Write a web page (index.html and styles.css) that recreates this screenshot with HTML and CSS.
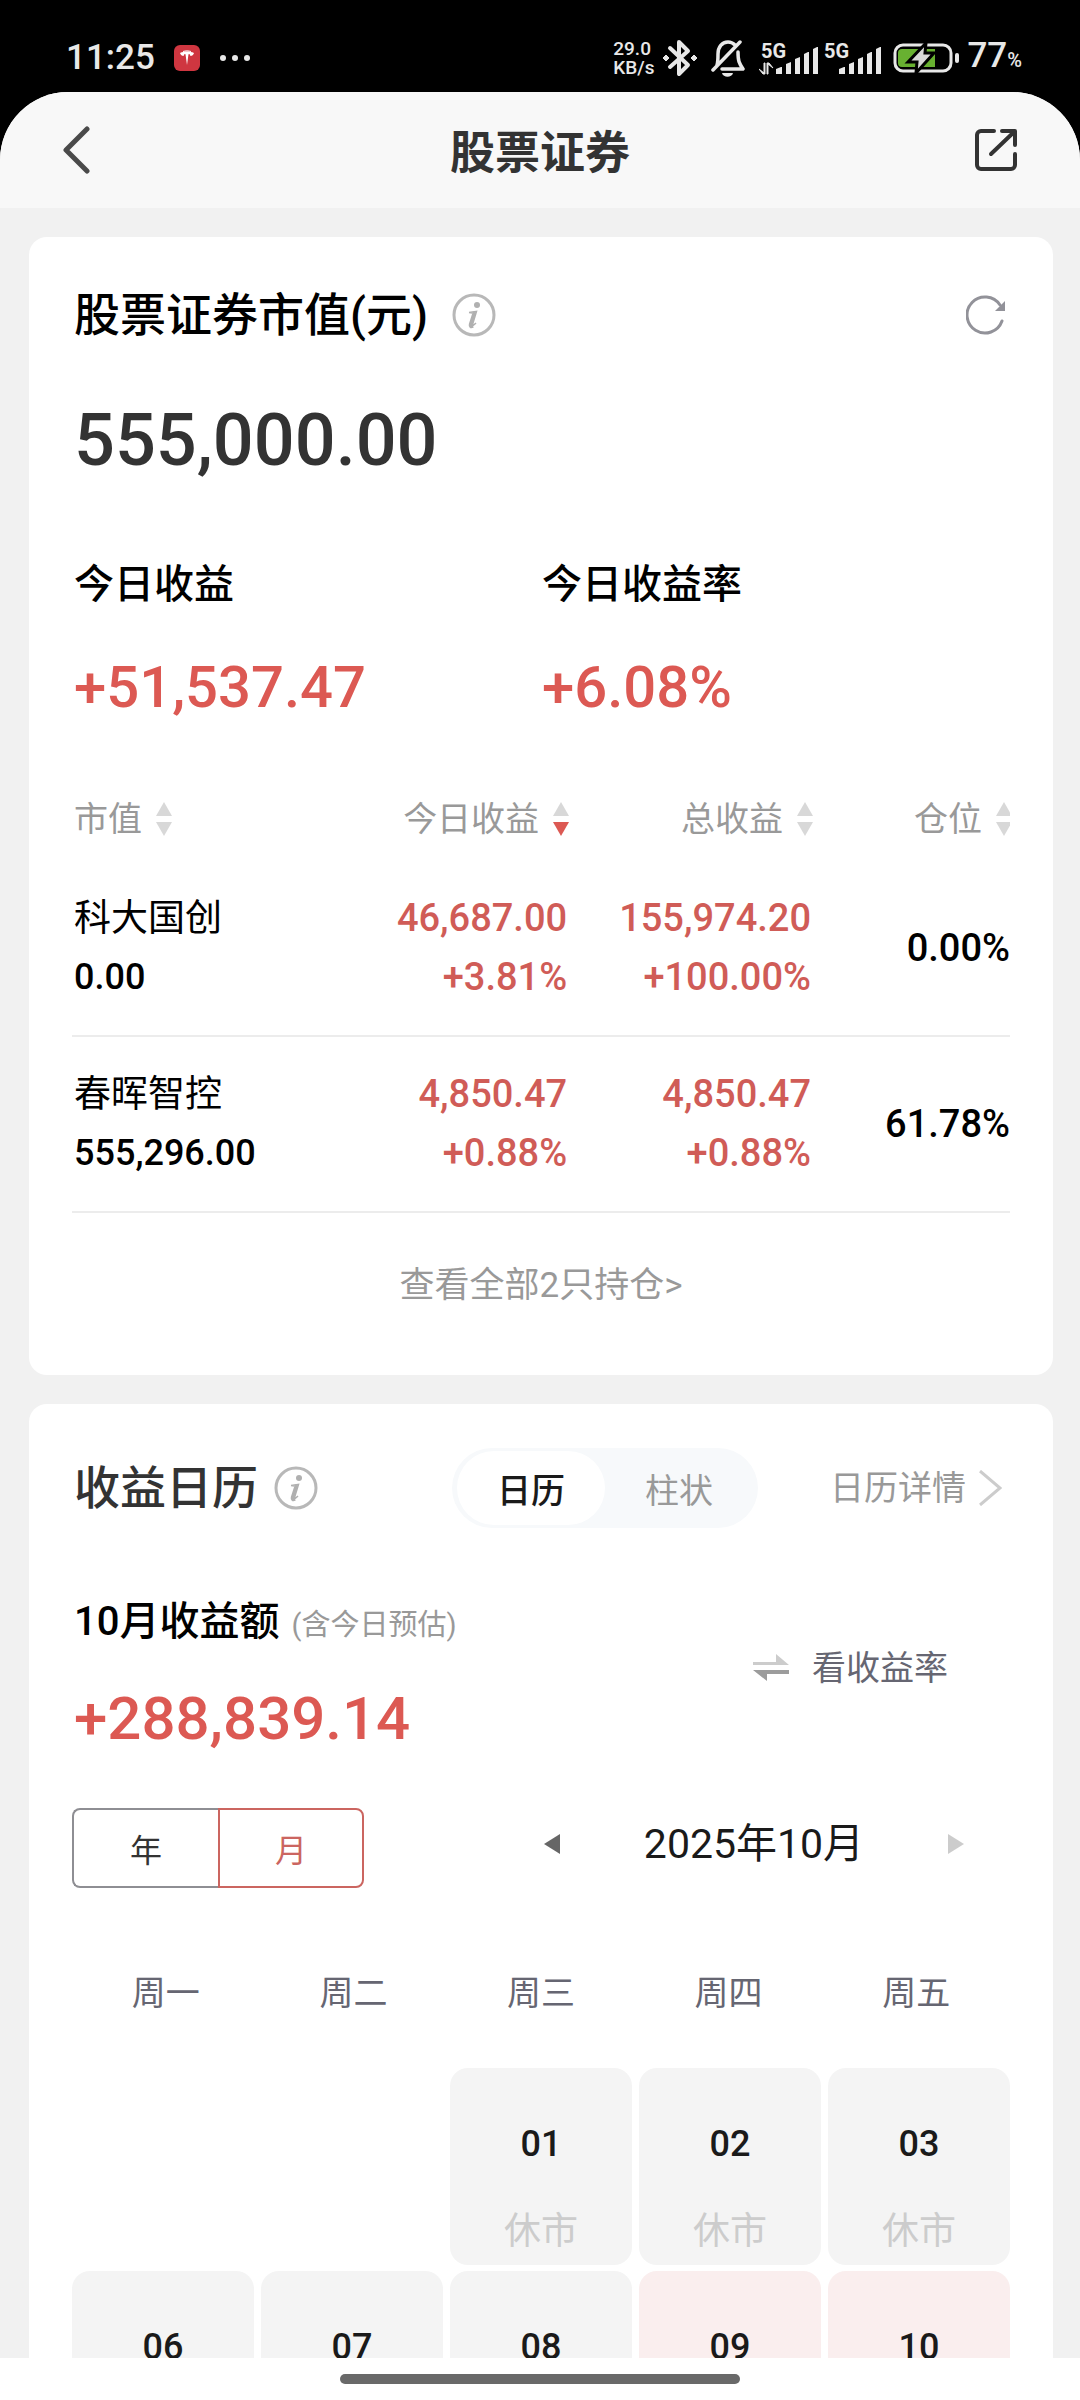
FILE: index.html
```html
<!DOCTYPE html>
<html lang="zh-CN">

<head>
    <meta charset="UTF-8">
    <meta name="viewport" content="width=device-width, initial-scale=1.0">
    <title>股票证券</title>
    <link rel="stylesheet" href="styles.css">
</head>

<body>
    <!-- shared symbols -->
    <svg class="defs" width="0" height="0" aria-hidden="true">
        <symbol id="info" viewBox="0 0 44 44">
            <circle cx="22" cy="22" r="20" fill="none" stroke="#b8b8b8" stroke-width="3" />
            <circle cx="25" cy="12" r="3" fill="#b0b0b0" />
            <path d="M17 19.500l7.500-1-4 13c-.4 1.500.5 1.500 3.500-1.500M17 19.500l3.500.5" fill="none" stroke="#b0b0b0" stroke-width="1.500" />
            <path d="M22.500 19l-4 12.500c-.5 2 .5 2.500 2.500 1.500" fill="none" stroke="#b0b0b0" stroke-width="3.500" />
        </symbol>
        <symbol id="sort" viewBox="0 0 16 34">
            <path class="sort-up" d="M8 0l8 14H0z" />
            <path class="sort-down" d="M0 20h16L8 34z" />
        </symbol>
        <symbol id="bars" viewBox="0 0 42 27">
            <path d="M0 22l5-2h1v7H0zM10 17l5-2v12h-5zM19 12l5-2v17h-5zM28 7l4-2h1v22h-5zM37 2l4-2h1v27h-5z" fill="#e8e8e8" />
        </symbol>
    </svg>

    <div class="status">
        <span class="clock">11:25</span>
        <svg class="app-badge" width="26" height="26" viewBox="0 0 26 26">
            <rect width="26" height="26" rx="6" fill="#cf3640" />
            <path d="M6 8c4-2 10-2 14 0-.5 2-2 3-3.500 3l-1-2-1 .3L13 20l-1.500-10.700-1-.3-1 2C8 11 6.500 10 6 8z" fill="#fff" />
            <path d="M9 6.500c2.500-.8 5.500-.8 8 0" fill="none" stroke="#fff" />
        </svg>
        <svg class="dots" width="30" height="8" viewBox="0 0 30 8" fill="#e8e8e8">
            <circle cx="3" cy="4" r="3" />
            <circle cx="15" cy="4" r="3" />
            <circle cx="27" cy="4" r="3" />
        </svg>

        <div class="status-right">
            <span class="speed"><span>29.0</span><span>KB/s</span></span>
            <svg width="34" height="38" viewBox="0 0 34 38">
                <path d="M7 9l18 17-9 9V3l9 9L7 28" fill="none" stroke="#e8e8e8" stroke-width="4" stroke-linejoin="round" stroke-linecap="round" />
                <path d="M3 16l3 3-3 3-3-3zM31 16l3 3-3 3-3-3z" fill="#e8e8e8" stroke="#e8e8e8" />
            </svg>
            <svg class="bell" width="34" height="38" viewBox="0 0 34 38">
                <path d="M6 26c1-3 1-6 1-11 0-7 4-12 10-12 3 0 5 1 7 3M27 13c0 9 1 11 5 17H11M2 31L29 3" fill="none" stroke="#e8e8e8" stroke-width="3.500" stroke-linecap="round" stroke-linejoin="round" />
                <path d="M11 34h11c-1 5-10 5-11 0z" fill="#e8e8e8" />
            </svg>
            <svg width="59" height="36" viewBox="0 0 59 36">
                <text class="net" x="2" y="18">5G</text>
                <path d="M0 29l5 4V23h1v11H4zM14 28l-5-4v10H8V23h2z" fill="#e8e8e8" stroke="#e8e8e8" />
                <use href="#bars" x="17" y="7" width="42" height="27" />
            </svg>
            <svg class="sim" width="57" height="36" viewBox="0 0 57 36">
                <text class="net" x="0" y="18">5G</text>
                <use href="#bars" x="15" y="7" width="42" height="27" />
            </svg>
            <svg class="battery" width="66" height="32" viewBox="0 0 66 32">
                <rect x="2" y="3" width="56" height="26" rx="8" fill="none" stroke="#e8e8e8" stroke-width="3" />
                <path d="M9 7h33v18H9a4 4 0 0 1-4-4V11a4 4 0 0 1 4-4z" fill="#68b131" />
                <path d="M33 1L15 20h9l-1 11 18-20h-9z" fill="#d8d8d8" stroke="#000" stroke-width="3" />
                <rect x="62" y="11" width="4" height="10" rx="2" fill="#e8e8e8" />
            </svg>
            <span class="level">77<small>%</small></span>
        </div>
    </div>

    <div class="screen">
        <header class="topbar">
            <button type="button" class="icon-btn" aria-label="返回">
                <svg width="30" height="48" viewBox="0 0 30 48">
                    <path d="M25 3L4 24l21 21" fill="none" stroke="#4a4a4a" stroke-width="5" stroke-linecap="round" stroke-linejoin="round" />
                </svg>
            </button>
            <h1>股票证券</h1>
            <button type="button" class="icon-btn" aria-label="分享">
                <svg width="44" height="44" viewBox="0 0 44 44">
                    <path d="M20 3H7a4 4 0 0 0-4 4v30a4 4 0 0 0 4 4h30a4 4 0 0 0 4-4V26M28 3h13v14M40 4L17 26" fill="none" stroke="#333" stroke-width="4" stroke-linecap="round" stroke-linejoin="round" />
                </svg>
            </button>
        </header>

        <main>
            <section class="card holdings">
                <div class="card-head">
                    <h2>股票证券市值(元)</h2>
                    <button type="button" class="icon-btn" aria-label="说明"><svg width="44" height="44"><use href="#info" /></svg></button>
                    <button type="button" class="icon-btn refresh" aria-label="刷新">
                        <svg width="40" height="40" viewBox="0 0 40 40">
                            <path d="M36 26A18 18 0 1 1 34 10" fill="none" stroke="#929299" stroke-width="3" stroke-linecap="round" />
                            <path d="M39 6v10h-10z" fill="#929299" />
                        </svg>
                    </button>
                </div>
                <p class="total">555,000.00</p>
                <dl class="today">
                    <div>
                        <dt>今日收益</dt>
                        <dd>+51,537.47</dd>
                    </div>
                    <div>
                        <dt>今日收益率</dt>
                        <dd>+6.08%</dd>
                    </div>
                </dl>

                <table>
                    <thead>
                        <tr>
                            <th><button type="button">市值<svg width="16" height="34" viewBox="0 0 16 34"><use href="#sort" width="16" height="34" /></svg></button></th>
                            <th><button type="button" class="desc">今日收益<svg width="16" height="34" viewBox="0 0 16 34"><use href="#sort" width="16" height="34" /></svg></button></th>
                            <th><button type="button">总收益<svg width="16" height="34" viewBox="0 0 16 34"><use href="#sort" width="16" height="34" /></svg></button></th>
                            <th><button type="button">仓位<svg width="14" height="34" viewBox="0 0 14 34"><use href="#sort" width="16" height="34" /></svg></button></th>
                        </tr>
                    </thead>
                    <tbody>
                        <tr>
                            <td><span class="name">科大国创</span><span class="value">0.00</span></td>
                            <td class="up"><span>46,687.00</span><span>+3.81%</span></td>
                            <td class="up"><span>155,974.20</span><span>+100.00%</span></td>
                            <td>0.00%</td>
                        </tr>
                        <tr>
                            <td><span class="name">春晖智控</span><span class="value">555,296.00</span></td>
                            <td class="up"><span>4,850.47</span><span>+0.88%</span></td>
                            <td class="up"><span>4,850.47</span><span>+0.88%</span></td>
                            <td>61.78%</td>
                        </tr>
                    </tbody>
                </table>
                <a href="#" class="more">查看全部2只持仓&gt;</a>
            </section>

            <section class="card calendar">
                <div class="card-head">
                    <h2>收益日历</h2>
                    <button type="button" class="icon-btn" aria-label="说明"><svg width="44" height="44"><use href="#info" /></svg></button>
                    <div class="segment">
                        <button type="button" class="active">日历</button>
                        <button type="button">柱状</button>
                    </div>
                    <a href="#" class="detail">日历详情
                        <svg width="24" height="36" viewBox="0 0 24 36">
                            <path d="M2 1l20 17L2 35" fill="none" stroke="#ccc" stroke-width="3" />
                        </svg>
                    </a>
                </div>

                <div class="month">
                    <div>
                        <p class="month-label">10月收益额<small>(含今日预估)</small></p>
                        <p class="month-value">+288,839.14</p>
                    </div>
                    <button type="button" class="switch">
                        <svg width="38" height="28" viewBox="0 0 38 28">
                            <path d="M1 8h23V0l13 11H1z" fill="#ccc" />
                            <path d="M1 16h36v4H15v7z" fill="#9c9c9c" />
                        </svg>
                        看收益率
                    </button>
                </div>

                <div class="range">
                    <div class="period">
                        <button type="button">年</button>
                        <button type="button" class="active">月</button>
                    </div>
                    <div class="picker">
                        <button type="button" class="icon-btn" aria-label="上个月"><svg width="16" height="20" viewBox="0 0 16 20"><path d="M16 0v20L0 10z" fill="#666" /></svg></button>
                        <span>2025年10月</span>
                        <button type="button" class="icon-btn" aria-label="下个月"><svg width="16" height="20" viewBox="0 0 16 20"><path d="M0 0v20l16-10z" fill="#ccc" /></svg></button>
                    </div>
                </div>

                <div class="weekdays">
                    <span>周一</span>
                    <span>周二</span>
                    <span>周三</span>
                    <span>周四</span>
                    <span>周五</span>
                </div>
                <div class="days">
                    <div class="day first"><b>01</b><span>休市</span></div>
                    <div class="day"><b>02</b><span>休市</span></div>
                    <div class="day"><b>03</b><span>休市</span></div>
                    <div class="day"><b>06</b></div>
                    <div class="day"><b>07</b></div>
                    <div class="day"><b>08</b></div>
                    <div class="day gain"><b>09</b></div>
                    <div class="day gain"><b>10</b></div>
                </div>
            </section>
        </main>
    </div>

    <div class="home-bar"><i></i></div>
</body>

</html>
```

FILE: styles.css
```css
* {
    box-sizing: border-box;
}

body {
    margin: 0;
    height: 100vh;
    display: flex;
    flex-direction: column;
    overflow: hidden;
    background: #000;
    color: #000;
    font-family: Roboto, "Noto Sans CJK SC", sans-serif;
}

h1,
h2,
p,
dl,
dd {
    margin: 0;
}

button {
    padding: 0;
    border: none;
    background: none;
    color: inherit;
    font: inherit;
    cursor: pointer;
}

a {
    color: #999;
    text-decoration: none;
}

svg {
    display: block;
    flex: none;
}

.defs {
    position: absolute;
}

/* status bar */
.status {
    flex: none;
    display: flex;
    align-items: center;
    height: 92px;
    padding: 24px 58px 0 66px;
    color: #e8e8e8;
}

.clock,
.level {
    font-size: 35px;
    font-weight: 500;
    line-height: 40px;
}

.app-badge {
    margin-left: 19px;
}

.dots {
    margin-left: 20px;
}

.status-right {
    display: flex;
    align-items: center;
    margin-left: auto;
}

.speed {
    display: flex;
    flex-direction: column;
    margin-right: 9px;
    font-size: 19px;
    font-weight: 500;
    line-height: 19px;
}

.bell {
    margin: 0 14px;
}

.net {
    font-size: 20px;
    font-weight: 700;
    fill: #e8e8e8;
}

.sim {
    margin-left: 6px;
}

.battery {
    margin: 0 8px 0 12px;
}

.level {
    display: flex;
    align-items: baseline;
}

.level small {
    font-size: 20px;
}

/* page */
.screen {
    flex: 1;
    min-height: 0;
    overflow: hidden;
    background: #f1f1f1;
    border-radius: 68px 68px 0 0;
}

.topbar {
    display: grid;
    grid-template-columns: 1fr auto 1fr;
    align-items: center;
    height: 116px;
    padding: 0 62px;
    background: #f8f8f8;
}

.topbar .icon-btn:last-child {
    justify-self: end;
}

.topbar h1 {
    padding-top: 8px;
    color: #333;
    font-size: 45px;
    font-weight: 700;
    line-height: 60px;
}

main {
    display: flex;
    flex-direction: column;
    gap: 29px;
    padding: 29px 27px 29px 29px;
}

.card {
    padding: 44px 43px;
    background: #fff;
    border-radius: 18px;
}

.holdings {
    padding-top: 48px;
}

.card-head {
    display: flex;
    align-items: center;
}

.card-head h2 {
    padding-left: 2px;
    margin-right: 16px;
    font-size: 46px;
    font-weight: 500;
    line-height: 60px;
}

.holdings h2 {
    margin-right: 24px;
}

.refresh {
    margin-left: auto;
    margin-right: 4px;
}

.total {
    margin-top: 54px;
    padding-left: 2px;
    color: #333;
    font-size: 72px;
    font-weight: 500;
    line-height: 84px;
}

.today {
    display: grid;
    grid-template-columns: 1fr 1fr;
    margin-top: 74px;
    padding-left: 2px;
}

.today dt {
    font-size: 40px;
    font-weight: 500;
    line-height: 56px;
}

.today dd {
    margin-top: 40px;
    color: #dc5953;
    font-size: 58px;
    font-weight: 500;
    line-height: 68px;
}

/* holdings table */
table {
    width: 100%;
    margin-top: 74px;
    border-collapse: collapse;
    table-layout: fixed;
}

th {
    width: 26%;
    padding: 0 0 18px;
    color: #999;
    font-size: 34px;
    font-weight: 400;
    line-height: 48px;
    text-align: right;
}

th:first-child {
    width: 27%;
    padding-left: 2px;
    text-align: left;
}

th:last-child {
    width: 21%;
}

th button {
    display: inline-flex;
    align-items: center;
    gap: 14px;
}

.sort-up {
    fill: #d8d8d8;
}

.sort-down {
    fill: var(--sort-down, #d8d8d8);
}

.desc {
    --sort-down: #dc5953;
}

td {
    padding: 28px 0;
    border-bottom: 2px solid #ececec;
    font-size: 38px;
    font-weight: 500;
    line-height: 59px;
    text-align: right;
}

td:first-child {
    padding-left: 2px;
    text-align: left;
}

td span {
    display: block;
}

.name {
    font-size: 37px;
    font-weight: 400;
}

.value {
    font-size: 36px;
}

.up {
    padding-right: 2px;
    color: #d05c57;
}

.more {
    display: block;
    margin-top: 48px;
    margin-bottom: 20px;
    font-size: 35px;
    line-height: 50px;
    text-align: center;
}

/* income calendar */
.calendar h2 {
    color: #333;
}

.segment {
    display: flex;
    height: 80px;
    margin-left: auto;
    padding: 3px 5px;
    border-radius: 40px;
    background: #f7f9fb;
}

.segment button {
    width: 148px;
    border-radius: 40px;
    color: #999;
    font-size: 34px;
}

.segment .active {
    background: #fff;
    color: #1a1a1a;
    font-weight: 500;
}

.detail {
    display: flex;
    align-items: center;
    gap: 12px;
    margin-left: 72px;
    margin-right: 8px;
    font-size: 34px;
    line-height: 50px;
}

.month {
    display: flex;
    align-items: center;
    justify-content: space-between;
    margin-top: 66px;
    padding: 0 62px 0 2px;
}

.month-label {
    font-size: 40px;
    font-weight: 500;
    line-height: 56px;
}

.month-label small {
    margin-left: 12px;
    color: #999;
    font-size: 29px;
    font-weight: 400;
}

.month-value {
    margin-top: 32px;
    color: #dc5953;
    font-size: 60px;
    font-weight: 500;
    line-height: 68px;
}

.switch {
    display: flex;
    align-items: center;
    gap: 22px;
    padding-bottom: 12px;
    color: #666672;
    font-size: 34px;
    line-height: 50px;
}

.range {
    display: flex;
    align-items: center;
    justify-content: space-between;
    margin-top: 55px;
}

.period {
    display: flex;
}

.period button {
    width: 146px;
    height: 80px;
    border: 2px solid #8e8e93;
    border-right: none;
    border-radius: 8px 0 0 8px;
    color: #333;
    font-size: 32px;
}

.period .active {
    border: 2px solid #cb6560;
    border-radius: 0 8px 8px 0;
    color: #cb6560;
}

.picker {
    display: flex;
    align-items: center;
    justify-content: space-between;
    width: 420px;
    margin-right: 46px;
    padding-bottom: 8px;
    color: #1a1a1a;
    font-size: 41px;
    line-height: 56px;
}

.weekdays,
.days {
    display: grid;
    grid-template-columns: repeat(5, 1fr);
}

.weekdays {
    margin-top: 80px;
    color: #666672;
    font-size: 34px;
    line-height: 50px;
    text-align: center;
}

.days {
    gap: 6px 7px;
    margin-top: 50px;
}

.day {
    display: flex;
    flex-direction: column;
    align-items: center;
    gap: 38px;
    min-height: 197px;
    padding: 51px 0 8px;
    border-radius: 18px;
    background: #f4f4f4;
    line-height: 50px;
}

/* the month starts on Wednesday */
.first {
    grid-column-start: 3;
}

.gain {
    background: #faeeee;
}

.day b {
    color: #1a1a1a;
    font-size: 36px;
    font-weight: 500;
}

.day span {
    color: #ccc;
    font-size: 37px;
}

.home-bar {
    flex: none;
    display: flex;
    align-items: center;
    justify-content: center;
    height: 42px;
    background: #fff;
}

.home-bar i {
    width: 37%;
    height: 10px;
    border-radius: 5px;
    background: #696969;
}
```
